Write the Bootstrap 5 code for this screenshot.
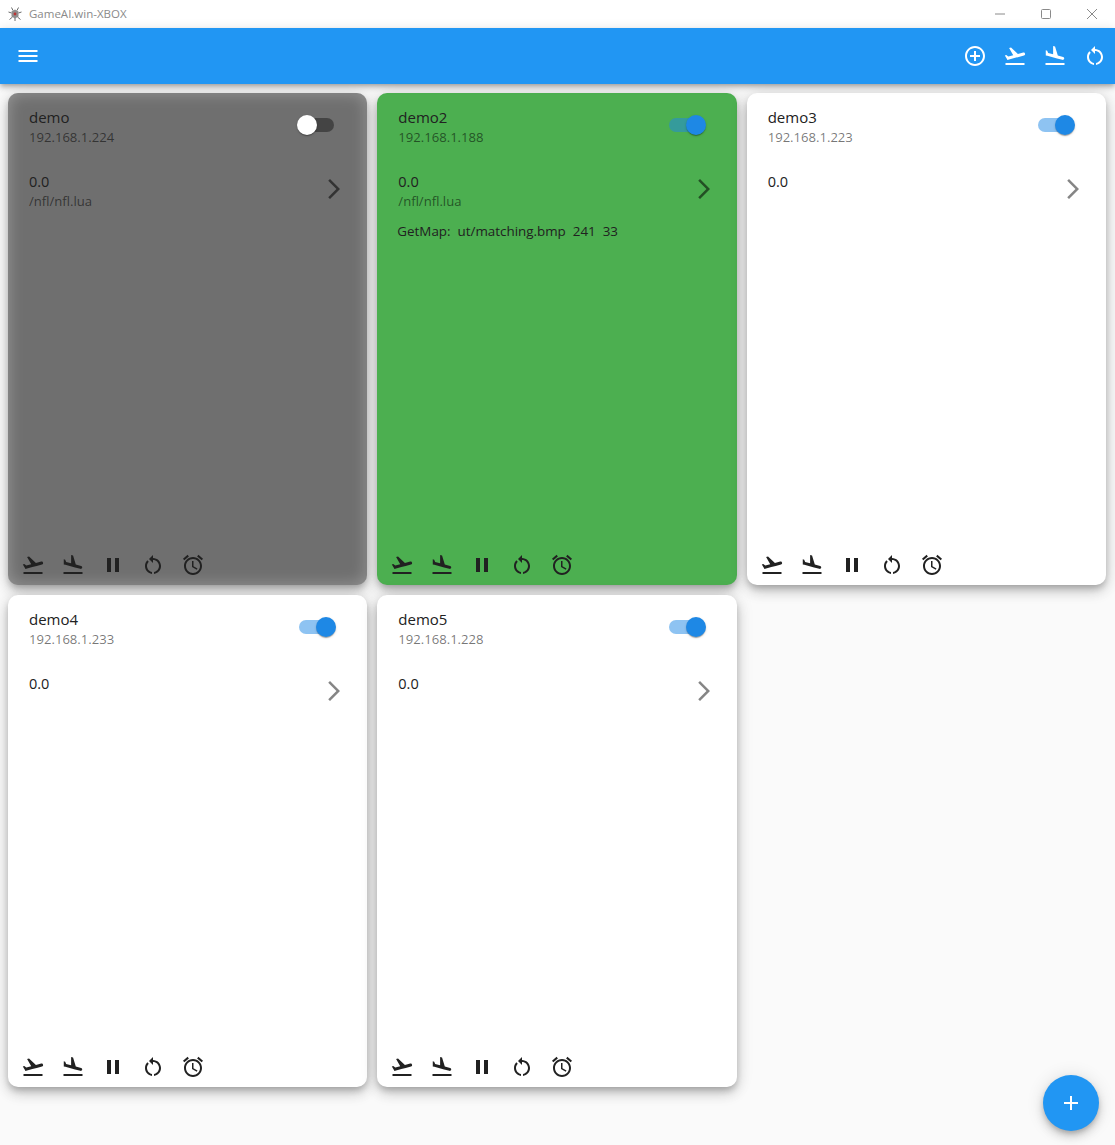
<!DOCTYPE html>
<html lang="en">
<head>
<meta charset="utf-8">
<title>GameAI.win-XBOX</title>
<link href="https://cdn.jsdelivr.net/npm/bootstrap@5.3.0/dist/css/bootstrap.min.css" rel="stylesheet">
<style>
html,body{height:1145px;overflow:hidden}
body{background:#fafafa;font-family:"Open Sans","Noto Sans",sans-serif;color:#212121}
.win-bar{height:28px;background:#fff;color:#8a8a8a;font-size:11.5px;padding-left:7px}
.win-title{margin-left:6px}
.win-btn{width:46px;height:28px;color:#8a8a8a}
.app-bar{height:56px;background:#2196f3;box-shadow:0 2px 4px -1px rgba(0,0,0,.2),0 4px 5px rgba(0,0,0,.14),0 1px 10px rgba(0,0,0,.12);padding:0 8px 0 16px;position:relative;z-index:2}
.app-acts{gap:16px}
.ico{width:24px;height:24px;fill:currentColor;display:block;flex:none}
.app-bar .ico{color:#fff}
.device-grid{display:grid;grid-template-columns:repeat(3,1fr);grid-template-rows:492px 492px;gap:10px;padding:9px 9px 0 8px}
.device{border-radius:10px;background:#fff;box-shadow:0 4px 6px -1px rgba(0,0,0,.2),0 7px 13px rgba(0,0,0,.15),0 1px 18px rgba(0,0,0,.12);padding:14px 21px 0;position:relative;display:flex;flex-direction:column}
.device.off{background:#6f6f6f;box-shadow:0 4px 6px -1px rgba(0,0,0,.2),0 7px 13px rgba(0,0,0,.15),0 1px 18px rgba(0,0,0,.12),inset 0 0 16px rgba(255,255,255,.3)}
.device.on{background:#4caf50}
.dname{font-size:15px;line-height:21px}
.dsub{font-size:13.1px;line-height:18px;color:rgba(0,0,0,.54)}
.dval{font-size:14.5px;line-height:21px}
.sw{width:36px;height:14px;border-radius:7px;position:relative;margin:11px 11px 0 0}
.sw::after{content:"";position:absolute;top:-3px;width:20px;height:20px;border-radius:50%;box-shadow:0 2px 1px -1px rgba(0,0,0,.2),0 1px 1px rgba(0,0,0,.14),0 1px 3px rgba(0,0,0,.12)}
.sw.yes{background:rgba(30,136,229,.5)}
.sw.yes::after{right:-1px;background:#1e88e5}
.sw.no{background:rgba(0,0,0,.38);margin-right:12px}
.sw.no::after{left:-1px;background:#fff}
.val-row{margin-top:25px;height:40px}
.chev{color:rgba(0,0,0,.48);margin:6px 0 0}
.device.off .chev,.device.on .chev{color:rgba(0,0,0,.54)}
.logline{font-size:13.4px;line-height:18px;margin-top:11px;margin-left:-1px;white-space:pre}
.tools{position:absolute;left:13px;bottom:8px;gap:16px;color:#212121}
.fab{position:absolute;right:16px;bottom:14px;width:56px;height:56px;border-radius:50%;background:#2196f3;color:#fff;border:0;box-shadow:0 3px 5px -1px rgba(0,0,0,.2),0 6px 10px rgba(0,0,0,.14),0 1px 18px rgba(0,0,0,.12);z-index:3}
</style>
</head>
<body>
<svg width="0" height="0" class="position-absolute">
<defs>
<symbol id="i-takeoff" viewBox="0 0 24 24"><path d="M2.5 19h19v2h-19zm19.57-9.36c-.21-.8-1.04-1.28-1.84-1.06L14.92 10l-6.9-6.43-1.93.51 4.14 7.17-4.97 1.33-1.97-1.54-1.45.39 1.82 3.16.77 1.33 1.6-.43 5.31-1.42 4.35-1.16L21 11.49c.81-.23 1.28-1.05 1.07-1.85z"/></symbol>
<symbol id="i-land" viewBox="0 0 24 24"><path d="M2.5 19h19v2h-19zm7.18-5.73l4.35 1.16 5.31 1.42c.8.21 1.62-.26 1.84-1.06.21-.8-.26-1.62-1.06-1.84l-5.31-1.42-2.76-9.02L10.12 2v8.28L5.15 8.95l-.93-2.32-1.45-.39v5.17l1.6.43 5.31 1.43z"/></symbol>
<symbol id="i-pause" viewBox="0 0 24 24"><path d="M6 19h4V5H6v14zm8-14v14h4V5h-4z"/></symbol>
<symbol id="i-restart" viewBox="0 0 24 24"><path d="M12 5V2L8 6l4 4V7c3.31 0 6 2.69 6 6 0 2.97-2.17 5.43-5 5.91v2.02c3.95-.49 7-3.85 7-7.93 0-4.42-3.58-8-8-8zm-6 8c0-1.65.67-3.15 1.76-4.24L6.34 7.34C4.9 8.79 4 10.79 4 13c0 4.08 3.05 7.44 7 7.93v-2.02c-2.83-.48-5-2.94-5-5.91z"/></symbol>
<symbol id="i-alarm" viewBox="0 0 24 24"><path d="M22 5.72l-4.6-3.86-1.29 1.53 4.6 3.86L22 5.72zM7.88 3.39L6.6 1.86 2 5.71l1.29 1.53 4.59-3.85zM12.5 8H11v6l4.75 2.85.75-1.23-4-2.37V8zM12 4c-4.97 0-9 4.03-9 9s4.03 9 9 9 9-4.03 9-9-4.03-9-9-9zm0 16c-3.87 0-7-3.13-7-7s3.13-7 7-7 7 3.13 7 7-3.13 7-7 7z"/></symbol>
<symbol id="i-chev" viewBox="0 0 24 24"><path d="M6.23 20.23 8 22l10-10L8 2 6.23 3.77 14.46 12z"/></symbol>
<symbol id="i-addc" viewBox="0 0 24 24"><path d="M13 7h-2v4H7v2h4v4h2v-4h4v-2h-4V7zm-1-5C6.48 2 2 6.48 2 12s4.48 10 10 10 10-4.48 10-10S17.52 2 12 2zm0 18c-4.41 0-8-3.59-8-8s3.59-8 8-8 8 3.59 8 8-3.59 8-8 8z"/></symbol>
<symbol id="i-menu" viewBox="0 0 24 24"><path d="M2.5 18h19v-2h-19v2zm0-5h19v-2h-19v2zm0-7v2h19V6h-19z"/></symbol>
<symbol id="i-add" viewBox="0 0 24 24"><path d="M19 13h-6v6h-2v-6H5v-2h6V5h2v6h6v2z"/></symbol>
</defs>
</svg>

<div class="win-bar d-flex align-items-center justify-content-between">
  <div class="d-flex align-items-center">
    <svg width="16" height="16" viewBox="0 0 16 16"><path d="M8 3.5l3.5 2v5L8 12.5l-3.5-2v-5z" fill="#8d8d8d"/><circle cx="8" cy="8" r="1.4" fill="#b33"/><path d="M4.5 1.5l1.5 3M11.5 1.5l-1.500 3M1.500 6l3 1M14.500 6l-3 1M2.500 13.500l3-2.500M13.500 13.500l-3-2.500M8 12v3" stroke="#6a6a6a" stroke-width="1" fill="none"/></svg>
    <span class="win-title">GameAI.win-XBOX</span>
  </div>
  <div class="d-flex">
    <div class="win-btn d-flex align-items-center justify-content-center"><svg width="10" height="10" viewBox="0 0 10 10"><path d="M0 5h10" stroke="currentColor"/></svg></div>
    <div class="win-btn d-flex align-items-center justify-content-center"><svg width="10" height="10" viewBox="0 0 10 10"><rect x=".5" y=".5" width="9" height="9" rx="1" fill="none" stroke="currentColor"/></svg></div>
    <div class="win-btn d-flex align-items-center justify-content-center"><svg width="10" height="10" viewBox="0 0 10 10"><path d="M0 0l10 10M10 0L0 10" stroke="currentColor"/></svg></div>
  </div>
</div>

<div class="app-bar d-flex align-items-center justify-content-between">
  <svg class="ico"><use href="#i-menu"/></svg>
  <div class="d-flex app-acts">
    <svg class="ico"><use href="#i-addc"/></svg>
    <svg class="ico"><use href="#i-takeoff"/></svg>
    <svg class="ico"><use href="#i-land"/></svg>
    <svg class="ico"><use href="#i-restart"/></svg>
  </div>
</div>

<div class="device-grid">
  <div class="device off">
    <div class="d-flex justify-content-between"><div><div class="dname">demo</div><div class="dsub">192.168.1.224</div></div><div class="sw no"></div></div>
    <div class="d-flex justify-content-between val-row"><div><div class="dval">0.0</div><div class="dsub">/nfl/nfl.lua</div></div><svg class="ico chev"><use href="#i-chev"/></svg></div>
    <div class="tools d-flex"><svg class="ico"><use href="#i-takeoff"/></svg><svg class="ico"><use href="#i-land"/></svg><svg class="ico"><use href="#i-pause"/></svg><svg class="ico"><use href="#i-restart"/></svg><svg class="ico"><use href="#i-alarm"/></svg></div>
  </div>
  <div class="device on">
    <div class="d-flex justify-content-between"><div><div class="dname">demo2</div><div class="dsub">192.168.1.188</div></div><div class="sw yes"></div></div>
    <div class="d-flex justify-content-between val-row"><div><div class="dval">0.0</div><div class="dsub">/nfl/nfl.lua</div></div><svg class="ico chev"><use href="#i-chev"/></svg></div>
    <div class="logline">GetMap:  ut/matching.bmp  241  33</div>
    <div class="tools d-flex"><svg class="ico"><use href="#i-takeoff"/></svg><svg class="ico"><use href="#i-land"/></svg><svg class="ico"><use href="#i-pause"/></svg><svg class="ico"><use href="#i-restart"/></svg><svg class="ico"><use href="#i-alarm"/></svg></div>
  </div>
  <div class="device">
    <div class="d-flex justify-content-between"><div><div class="dname">demo3</div><div class="dsub">192.168.1.223</div></div><div class="sw yes"></div></div>
    <div class="d-flex justify-content-between val-row"><div><div class="dval">0.0</div></div><svg class="ico chev"><use href="#i-chev"/></svg></div>
    <div class="tools d-flex"><svg class="ico"><use href="#i-takeoff"/></svg><svg class="ico"><use href="#i-land"/></svg><svg class="ico"><use href="#i-pause"/></svg><svg class="ico"><use href="#i-restart"/></svg><svg class="ico"><use href="#i-alarm"/></svg></div>
  </div>
  <div class="device">
    <div class="d-flex justify-content-between"><div><div class="dname">demo4</div><div class="dsub">192.168.1.233</div></div><div class="sw yes"></div></div>
    <div class="d-flex justify-content-between val-row"><div><div class="dval">0.0</div></div><svg class="ico chev"><use href="#i-chev"/></svg></div>
    <div class="tools d-flex"><svg class="ico"><use href="#i-takeoff"/></svg><svg class="ico"><use href="#i-land"/></svg><svg class="ico"><use href="#i-pause"/></svg><svg class="ico"><use href="#i-restart"/></svg><svg class="ico"><use href="#i-alarm"/></svg></div>
  </div>
  <div class="device">
    <div class="d-flex justify-content-between"><div><div class="dname">demo5</div><div class="dsub">192.168.1.228</div></div><div class="sw yes"></div></div>
    <div class="d-flex justify-content-between val-row"><div><div class="dval">0.0</div></div><svg class="ico chev"><use href="#i-chev"/></svg></div>
    <div class="tools d-flex"><svg class="ico"><use href="#i-takeoff"/></svg><svg class="ico"><use href="#i-land"/></svg><svg class="ico"><use href="#i-pause"/></svg><svg class="ico"><use href="#i-restart"/></svg><svg class="ico"><use href="#i-alarm"/></svg></div>
  </div>
</div>

<button class="fab btn d-flex align-items-center justify-content-center p-0" type="button" aria-label="Add"><svg class="ico"><use href="#i-add"/></svg></button>
<script src="https://cdn.jsdelivr.net/npm/bootstrap@5.3.0/dist/js/bootstrap.bundle.min.js"></script>
</body>
</html>
